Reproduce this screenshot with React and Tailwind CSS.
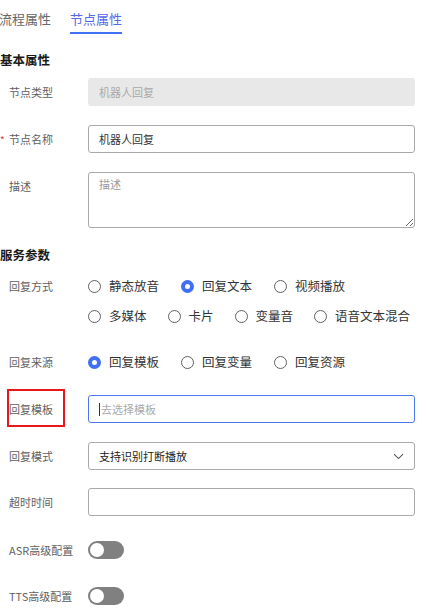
import { useState } from "react";

const font = { fontFamily: '"Noto Sans CJK SC", "Noto Sans", sans-serif' };

function Radio({ label, checked }) {
  return (
    <div className="flex items-center gap-[8px]">
      {checked ? (
        <span className="w-[13px] h-[13px] rounded-full border-[4px] border-[#3f6ff2] bg-white box-border" />
      ) : (
        <span className="w-[13px] h-[13px] rounded-full border border-[#606060] bg-white box-border" />
      )}
      <span className="text-[12.5px] leading-[20px] text-[#333]">{label}</span>
    </div>
  );
}

function Toggle() {
  return (
    <div className="w-[36px] h-[18px] rounded-full bg-[#808080] flex items-center px-[2px]">
      <span className="w-[14px] h-[14px] rounded-full bg-white" />
    </div>
  );
}

function Row({ label, children, className = "", labelClass = "", required }) {
  return (
    <div className={`relative flex items-center pl-[9px] pr-[13px] ${className}`}>
      {required && <span className="absolute left-[0px] top-[10px] text-[10px] leading-none text-[#e53935]">*</span>}
      <div className={`w-[79px] shrink-0 text-[11px] leading-[20px] text-[#5f5f5f] ${labelClass}`}>{label}</div>
      <div className="flex-1">{children}</div>
    </div>
  );
}

export default function App() {
  const [name, setName] = useState("机器人回复");
  return (
    <div className="w-[428px] h-[615px] bg-white overflow-hidden" style={font}>
      {/* tabs */}
      <div className="flex h-[34px] ml-[-1px] gap-[19px]">
        <div className="pt-[9px] text-[13px] leading-[20px] text-[#666]">流程属性</div>
        <div className="pt-[9px] pb-[3px] border-b-2 border-[#3f6ff2] text-[13px] leading-[20px] text-[#5468e8] h-[34px] box-border">
          节点属性
        </div>
      </div>

      <div className="mt-[16px] text-[12.5px] leading-[20px] font-bold text-[#1a1a1a]">基本属性</div>

      <Row label="节点类型" className="mt-[8px]">
        <div className="h-[28px] rounded-[3px] bg-[#e8e8e8] flex items-center pl-[11px] text-[11px] text-[#a8a8a8]">机器人回复</div>
      </Row>

      <Row label="节点名称" className="mt-[19px]" required>
        <input
          value={name}
          onChange={(e) => setName(e.target.value)}
          className="w-full h-[28px] rounded-[3px] border border-[#a9a9a9] pl-[10px] text-[11px] text-[#333] outline-none"
        />
      </Row>

      <Row label="描述" className="mt-[19px] !items-start" labelClass="pt-[4px]">
        <textarea
          placeholder="描述"
          className="block w-full h-[56px] rounded-[3px] border border-[#a9a9a9] pl-[10px] pt-[2px] text-[11px] leading-[18px] text-[#333] placeholder:text-[#999] outline-none resize-y"
        />
      </Row>

      <div className="mt-[17px] text-[12.5px] leading-[20px] font-bold text-[#1a1a1a]">服务参数</div>

      <Row label="回复方式" className="mt-[11px]">
        <div className="flex gap-[22px]">
          <Radio label="静态放音" />
          <Radio label="回复文本" checked />
          <Radio label="视频播放" />
        </div>
      </Row>
      <div className="flex gap-[21px] pl-[88px] mt-[10px]">
        <Radio label="多媒体" />
        <Radio label="卡片" />
        <Radio label="变量音" />
        <Radio label="语音文本混合" />
      </div>

      <Row label="回复来源" className="mt-[26px]">
        <div className="flex gap-[22px]">
          <Radio label="回复模板" checked />
          <Radio label="回复变量" />
          <Radio label="回复资源" />
        </div>
      </Row>

      <div className="relative flex items-center pl-[9px] pr-[13px] mt-[23px]">
        <div className="w-[79px] shrink-0 text-[11px] leading-[20px] text-[#5f5f5f]">回复模板</div>
        <span className="absolute left-[7px] top-[-6px] w-[58px] h-[38px] border-2 border-[#e8171c]" />
        <div className="flex-1 h-[28px] rounded-[3px] border border-[#4a76ee] flex items-center pl-[10px] text-[11px] text-[#aaa]">
          <span className="w-px h-[13px] bg-[#333] mr-[1px]" />
          去选择模板
        </div>
      </div>

      <Row label="回复模式" className="mt-[19px]">
        <div className="h-[28px] rounded-[3px] border border-[#a9a9a9] flex items-center justify-between pl-[10px] pr-[10px] text-[11px] text-[#222]">
          <span>支持识别打断播放</span>
          <svg width="11" height="7" viewBox="0 0 11 7" fill="none" stroke="#555" strokeWidth="1.1">
            <path d="M1 1.2 L5.5 5.6 L10 1.2" />
          </svg>
        </div>
      </Row>

      <Row label="超时时间" className="mt-[18px]">
        <div className="h-[28px] rounded-[3px] border border-[#a9a9a9]" />
      </Row>

      <Row label="ASR高级配置" className="mt-[24px]">
        <Toggle />
      </Row>

      <Row label="TTS高级配置" className="mt-[26px]">
        <Toggle />
      </Row>
    </div>
  );
}
